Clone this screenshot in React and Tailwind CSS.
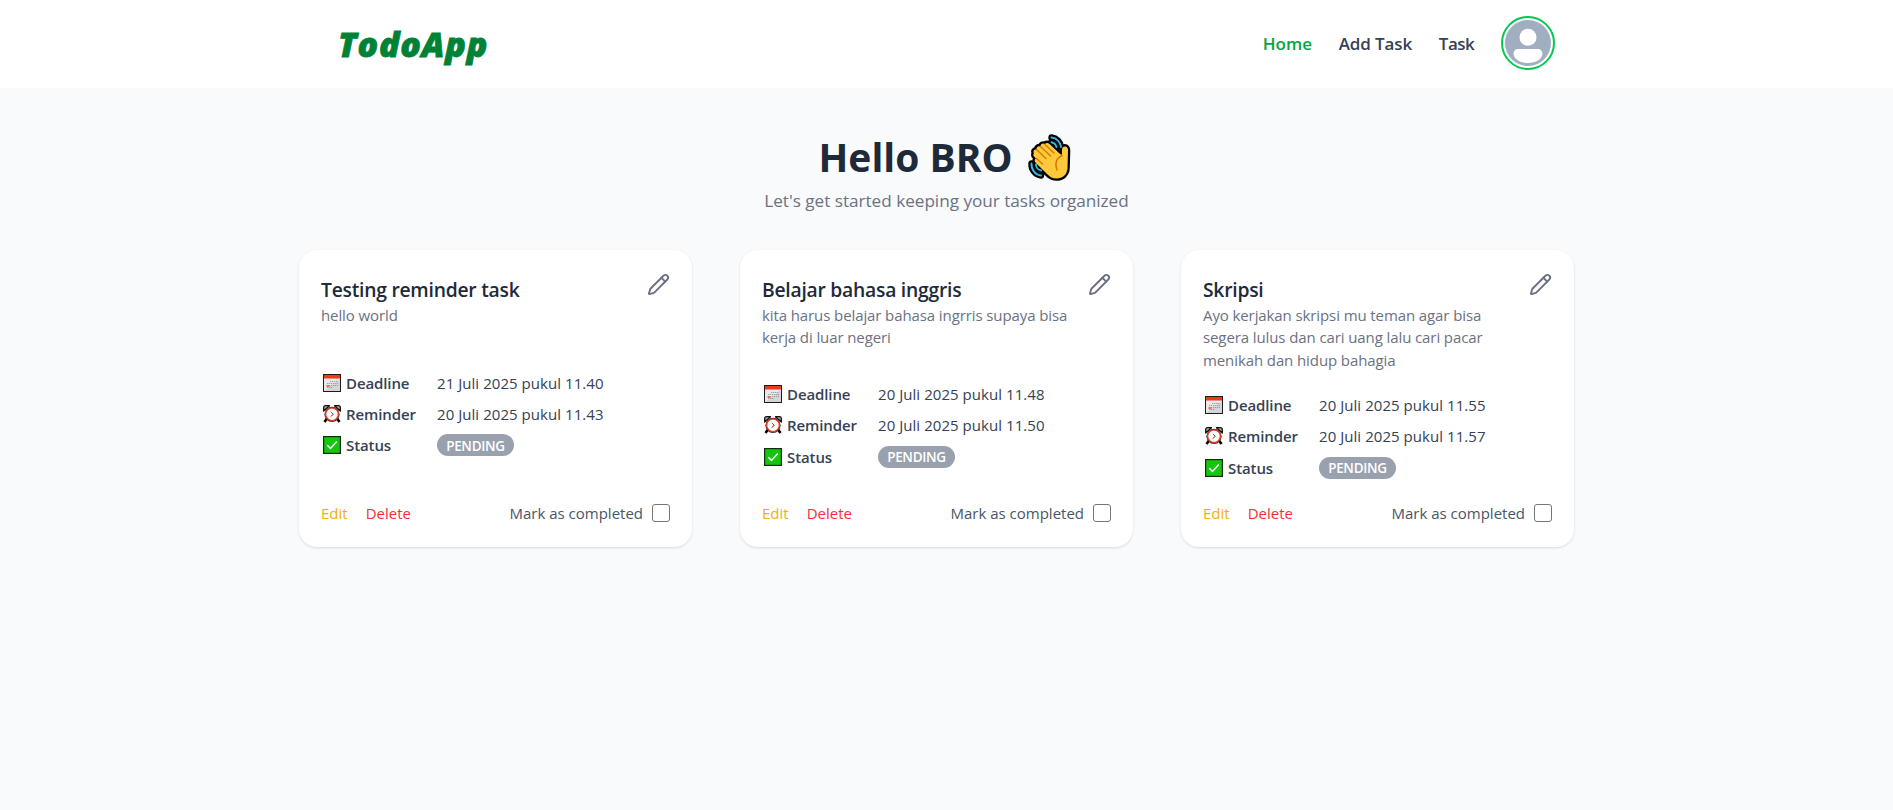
import { Pencil } from "lucide-react";

const tasks = [
  {
    title: "Testing reminder task",
    description: "hello world",
    deadline: "21 Juli 2025 pukul 11.40",
    reminder: "20 Juli 2025 pukul 11.43",
  },
  {
    title: "Belajar bahasa inggris",
    description: "kita harus belajar bahasa ingrris supaya bisa kerja di luar negeri",
    deadline: "20 Juli 2025 pukul 11.48",
    reminder: "20 Juli 2025 pukul 11.50",
  },
  {
    title: "Skripsi",
    description: "Ayo kerjakan skripsi mu teman agar bisa segera lulus dan cari uang lalu cari pacar menikah dan hidup bahagia",
    deadline: "20 Juli 2025 pukul 11.55",
    reminder: "20 Juli 2025 pukul 11.57",
  },
];

function WavingHand() {
  return (
    <svg viewBox="0 0 43 47" className="h-[47px] w-[43px] overflow-visible" fill="none" strokeLinecap="round" strokeLinejoin="round">
      <g stroke="#000" strokeWidth="6.4">
        <path d="M23.500 3.500C28.500 4 32.500 8 33 13" />
        <path d="M23 8.500c3 .5 5 2.500 6 5" />
        <path d="M3.500 29.500C3 35.500 7.500 41 13 41.500" />
        <path d="M8.500 31c0 3 2 5 5 6" />
      </g>
      <path
        d="M6 19c-1.500-2 .5-4 2.500-3.500-.5-2.500 2-4 4-3-.2-2.500 2.500-3.800 4.500-2.500.8-1.500 3-1.500 4.500 0l10 9.500 2.500 1.500V15.500c0-4 6-4.500 6 .5l-.5 18c-.2 6.500-5 10.500-11 10.500-4.500 0-7-2-10-5L7.500 28.500c-1.500-1.500-1-3.500.5-4L6.500 23c-1.500-1.200-1.500-2.800-.5-4Z"
        fill="#ffc83d"
        stroke="#000"
        strokeWidth="4.600"
      />
      <g stroke="#35b8e8" strokeWidth="1.900">
        <path d="M23.500 3.500C28.500 4 32.500 8 33 13" />
        <path d="M23.500 8.200c2.500.5 4.200 2.200 5 4.800" />
        <path d="M3.500 29.500C3 35.500 7.500 41 13 41.500" />
        <path d="M8 30.500c0 3 2.200 5.500 5.200 6" />
      </g>
      <path
        d="M6 19c-1.500-2 .5-4 2.500-3.500-.5-2.500 2-4 4-3-.2-2.500 2.500-3.800 4.500-2.500.8-1.500 3-1.500 4.500 0l10 9.500 2.500 1.500V15.500c0-4 6-4.500 6 .5l-.5 18c-.2 6.500-5 10.500-11 10.500-4.500 0-7-2-10-5L7.500 28.500c-1.500-1.500-1-3.500.5-4L6.500 23c-1.500-1.200-1.500-2.800-.5-4Z"
        fill="#ffc83d"
      />
      <path d="M8.500 15.500l9.500 9M12.500 12.500l10 9.500M17 10.500l9 8.500M8.500 24.500l6 5.500M34 21.500c-5 2.500-7.500 7.500-5 14.500" stroke="#d67d00" strokeWidth="1.500" />
    </svg>
  );
}

function CalendarIcon() {
  return (
    <svg viewBox="0 0 18 18" className="h-[18px] w-[18px]">
      <rect x=".5" y=".5" width="17" height="17" fill="#e9e9ea" stroke="#1c1c1c" />
      <rect x="1" y="1" width="16" height="3.500" fill="#f03a17" />
      <path d="M1 17 17 5v12Z" fill="#d3d5d8" />
      <path d="M7 7.500h8M4 9.500h11M4 11.500h11M4 13.500h6" stroke="#9b9da1" strokeWidth="1.200" strokeDasharray="1.300 .7" />
      <path d="M3.500 11h3v2h-3z" fill="#f36b52" />
    </svg>
  );
}

function AlarmIcon() {
  return (
    <svg viewBox="0 0 18 18" className="h-[18px] w-[18px]">
      <path d="M4 13.500 1.500 17M14 13.500 16.500 17" stroke="#000" strokeWidth="2.600" />
      <path d="M.7 6V2.500Q.7.7 2.500.7h4ZM17.300 6V2.500q0-1.800-1.800-1.800h-4Z" fill="#a9abb0" stroke="#111" strokeWidth="1.300" strokeLinejoin="round" />
      <circle cx="9" cy="9.300" r="7.600" fill="#222" />
      <circle cx="9" cy="9.300" r="6.400" fill="#fff" stroke="#e8391a" strokeWidth="1.400" />
      <path d="m7.800 7 2.600 2.300-2.200 1.900" fill="none" stroke="#555" strokeWidth="1" />
      <path d="M9.600 9.300 7.500 11.600" stroke="#f0523a" strokeWidth=".8" />
    </svg>
  );
}

function CheckIcon() {
  return (
    <svg viewBox="0 0 18 18" className="h-[18px] w-[18px]">
      <rect x=".6" y=".6" width="16.800" height="16.800" fill="#16c60c" stroke="#0b2f0a" strokeWidth="1.200" />
      <path d="m4.300 9.200 3.200 3.200 6.300-6.900" fill="none" stroke="#fff" strokeWidth="1.500" />
    </svg>
  );
}

function Avatar() {
  return (
    <div className="flex h-[54px] w-[54px] items-center justify-center rounded-full border-2 border-[#00c951] bg-white">
      <svg viewBox="0 0 46 46" className="h-[46px] w-[46px]">
        <circle cx="23" cy="23" r="23" fill="#a0aec0" />
        <circle cx="23" cy="17.300" r="8.500" fill="#fff" />
        <path d="M13 29h20a4.500 4.500 0 0 1 4.500 4.500C37.500 39 31 43 23 43S8.500 39 8.500 33.500A4.500 4.500 0 0 1 13 29Z" fill="#fff" />
      </svg>
    </div>
  );
}

function Row({ icon, label, children }) {
  return (
    <div className="flex h-[22px] items-center">
      <div className="flex w-[116px] items-center gap-[5px] pl-[2px] font-semibold tracking-[-0.1px]">
        {icon}
        <span>{label}</span>
      </div>
      {children}
    </div>
  );
}

function TaskCard({ task }) {
  return (
    <article className="flex h-[297px] flex-col justify-between rounded-[18px] bg-white px-[22px] pt-[22px] pb-[23px] text-[15px] leading-[22px] text-gray-700 shadow-[0_1px_3px_rgba(0,0,0,0.1),0_1px_2px_-1px_rgba(0,0,0,0.1)]">
      <div className="flex items-start justify-between">
        <div className="w-[310px] pt-[3px]">
          <h2 className="text-[19.3px] leading-[30px] font-semibold tracking-[-0.24px] text-gray-800">{task.title}</h2>
          <p className="-mt-px leading-[22.3px] tracking-[-0.1px] text-gray-500">{task.description}</p>
        </div>
        <Pencil className="mt-[1px] h-[23px] w-[23px] text-gray-500" strokeWidth={2} />
      </div>
      <div className="flex flex-col gap-[9.3px]">
        <Row icon={<CalendarIcon />} label="Deadline">
          <span className="tracking-[0.05px]">{task.deadline}</span>
        </Row>
        <Row icon={<AlarmIcon />} label="Reminder">
          <span className="tracking-[0.05px]">{task.reminder}</span>
        </Row>
        <Row icon={<CheckIcon />} label="Status">
          <span className="flex h-[22px] w-[77px] items-center justify-center rounded-full bg-gray-400 pt-[1px] text-[13.5px] font-semibold tracking-[-0.3px] text-white">
            PENDING
          </span>
        </Row>
      </div>
      <div className="flex h-[22px] items-center justify-between">
        <div className="flex gap-[18px]">
          <button className="text-yellow-500">Edit</button>
          <button className="text-red-500">Delete</button>
        </div>
        <label className="flex items-center gap-[9px] text-gray-600">
          Mark as completed
          <input type="checkbox" className="h-[18px] w-[18px] appearance-none rounded-[3px] border border-[#767676] bg-white" />
        </label>
      </div>
    </article>
  );
}

export default function App() {
  return (
    <div className="min-h-screen bg-gray-50 font-['Open_Sans',sans-serif]">
      <header className="h-[88px] bg-white">
        <div className="mx-auto flex h-full w-[1217px] items-center justify-between">
          <a className="text-[34px] leading-[40px] font-extrabold tracking-[0.75px] text-green-700 italic [-webkit-text-stroke:0.8px_#008236]">
            TodoApp
          </a>
          <nav className="mb-[2px] flex items-center gap-[26.7px] text-[17px] leading-[28px] font-semibold text-gray-700">
            <a className="pt-[1px] text-green-600">Home</a>
            <a className="pt-[1px] tracking-[-0.1px]">Add Task</a>
            <a className="pt-[1px] tracking-[-0.5px]">Task</a>
            <Avatar />
          </nav>
        </div>
      </header>
      <main className="mx-auto w-[1295px] pt-[47px]">
        <div className="flex flex-col items-center">
          <h1 className="mr-[3px] flex h-[44px] items-center gap-[16px] text-[39px] leading-[44px] font-bold text-gray-800">
            <span>Hello BRO</span>
            <WavingHand />
          </h1>
          <p className="mt-[8px] text-[17.2px] leading-[27px] tracking-[-0.03px] text-gray-500">Let's get started keeping your tasks organized</p>
        </div>
        <div className="mt-[36px] grid grid-cols-[393px_393px_393px] gap-[48px]">
          {tasks.map((task) => (
            <TaskCard key={task.title} task={task} />
          ))}
        </div>
      </main>
    </div>
  );
}
